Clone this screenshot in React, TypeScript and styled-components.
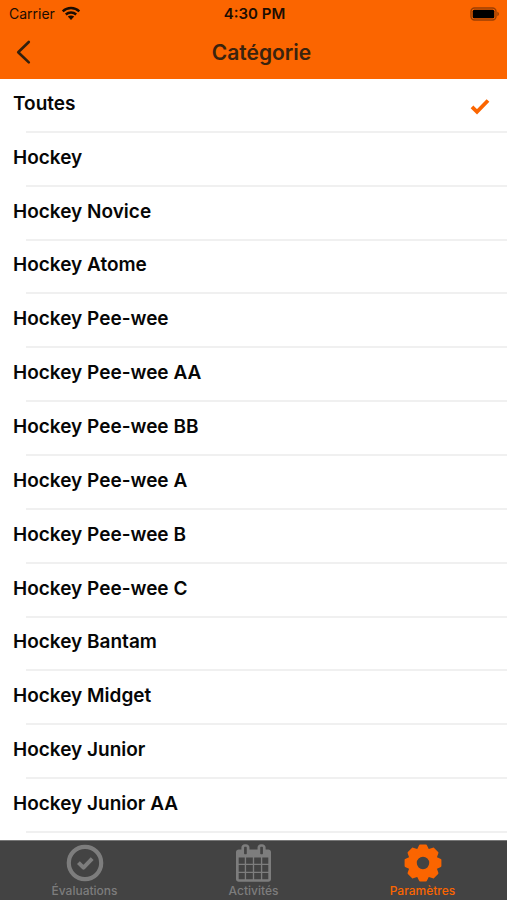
import React, { useState } from "react";
import styled, { createGlobalStyle } from "styled-components";

const orange = "#fb6500";

const GlobalStyle = createGlobalStyle`
  * { box-sizing: border-box; }
  body {
    margin: 0;
    background: #fff;
    color: #060606;
    font-family: Inter, "Liberation Sans", sans-serif;
  }
  button { font: inherit; border: 0; padding: 0; background: none; cursor: pointer; }
`;

const Screen = styled.div`
  display: flex;
  flex-direction: column;
  min-height: 100vh;
`;

const Header = styled.header`
  background: ${orange};
`;

const StatusBar = styled.div`
  display: grid;
  grid-template-columns: 1fr auto 1fr;
  align-items: center;
  height: 27px;
  padding: 0 7px 0 9px;
  font-size: 14px;
  color: #1c0d02;
`;

const Carrier = styled.div`
  display: flex;
  align-items: center;
  gap: 6px;
`;

const Clock = styled.time`
  font-size: 15px;
  line-height: 20px;
  font-weight: 600;
`;

const BatteryIcon = styled.svg`
  justify-self: end;
`;

const NavBar = styled.div`
  display: grid;
  grid-template-columns: 48px 1fr 32px;
  align-items: center;
  height: 52px;
`;

const BackButton = styled.button`
  display: grid;
  place-items: center;
  height: 52px;
  color: #33200e;
`;

const Title = styled.h1`
  margin: 0;
  font-size: 21px;
  line-height: 48px;
  font-weight: 600;
  text-align: center;
  color: #3a230e;
`;

const List = styled.ul`
  flex: 1;
  display: grid;
  grid-auto-rows: minmax(52px, 1fr);
  margin: 0;
  padding: 0 0 7px;
  list-style: none;
`;

const Row = styled.li`
  display: flex;
  flex-direction: column;
  &::after {
    content: "";
    height: 2px;
    margin-left: 26px;
    background: #f0f0f0;
  }
`;

const RowButton = styled.button`
  flex: 1;
  display: flex;
  align-items: center;
  justify-content: space-between;
  padding: 0 17px 2px 13px;
  font-size: 19px;
  line-height: 24px;
  font-weight: 600;
  text-align: left;
  color: #060606;
`;

const TickIcon = styled.svg`
  margin-top: 6px;
`;

const TabBar = styled.nav`
  display: grid;
  grid-template-columns: repeat(3, 1fr);
  height: 60px;
  background: #434343;
  border-top: 1px solid #777;
`;

const Tab = styled.button<{ $active: boolean }>`
  display: flex;
  flex-direction: column;
  align-items: center;
  gap: 1px;
  padding-top: 3px;
  font-size: 12px;
  line-height: 16px;
  font-weight: 500;
  color: ${(p) => (p.$active ? orange : "#7d7d7d")};
`;

const categories = [
  "Toutes",
  "Hockey",
  "Hockey Novice",
  "Hockey Atome",
  "Hockey Pee-wee",
  "Hockey Pee-wee AA",
  "Hockey Pee-wee BB",
  "Hockey Pee-wee A",
  "Hockey Pee-wee B",
  "Hockey Pee-wee C",
  "Hockey Bantam",
  "Hockey Midget",
  "Hockey Junior",
  "Hockey Junior AA",
];

const Wifi = () => (
  <svg width="20" height="15" viewBox="0 0 20 15" aria-hidden="true">
    <g fill="none" stroke="currentColor" strokeWidth="2.4">
      <path d="M1.7 5.3C6.4 .9 13.6 .9 18.3 5.3" />
      <path d="M4.8 8.5C7.8 5.8 12.2 5.8 15.2 8.5" />
    </g>
    <path d="M6.8 10.6C8.6 9 11.4 9 13.2 10.6L10 14Z" fill="currentColor" />
  </svg>
);

const Battery = () => (
  <BatteryIcon width="30" height="14" viewBox="0 0 30 14" aria-hidden="true">
    <rect x="1" y="1" width="25" height="12" rx="3.5" fill="none" stroke="#9a3f04" strokeWidth="1.4" />
    <rect x="2.7" y="2.7" width="21.6" height="8.6" rx="1.5" fill="#000" />
    <path d="M27.3 4.8C29.5 5.5 29.5 8.5 27.3 9.2Z" fill="#9a3f04" />
  </BatteryIcon>
);

const Back = () => (
  <svg width="16" height="26" viewBox="0 0 16 26" aria-hidden="true">
    <path d="M12.8 2L2.2 12.2L12.8 22.4" fill="none" stroke="currentColor" strokeWidth="2.6" strokeLinecap="round" strokeLinejoin="round" />
  </svg>
);

const Tick = () => (
  <TickIcon width="20" height="17" viewBox="0 0 20 17" aria-hidden="true">
    <path d="M2 8.8L7 13.8L18 2.5" fill="none" stroke={orange} strokeWidth="3.8" />
  </TickIcon>
);

const CheckCircle = () => (
  <svg width="38" height="38" viewBox="0 0 38 38" aria-hidden="true">
    <g fill="none" stroke="currentColor">
      <circle cx="19" cy="19" r="16.2" strokeWidth="4.2" />
      <path d="M12.4 18.6L17.5 23.7L26.2 14.6" strokeWidth="4" strokeLinejoin="round" />
    </g>
  </svg>
);

const Calendar = () => (
  <svg width="35" height="38" viewBox="0 0 1664 1792" aria-hidden="true">
    <path
      fill="currentColor"
      fillRule="evenodd"
      d="M128 1664h288v-288H128zM480 1664h320v-288H480zM128 1312h288V992H128zM480 1312h320V992H480zM128 928h288V640H128zM864 1664h320v-288H864zM480 928h320V640H480zM1248 1664h288v-288h-288zM864 1312h320V992H864zM512 448V160q0-32-32-32h-64q-32 0-32 32v288q0 32 32 32h64q32 0 32-32zM1248 1312h288V992h-288zM864 928h320V640H864zM1248 928h288V640h-288zM1280 448V160q0-32-32-32h-64q-32 0-32 32v288q0 32 32 32h64q32 0 32-32zM1664 384v1280q0 52-38 90t-90 38H128q-52 0-90-38t-38-90V384q0-52 38-90t90-38h128v-96q0-66 47-113T416 0h64q66 0 113 47t47 113v96h384v-96q0-66 47-113t113-47h64q66 0 113 47t47 113v96h128q52 0 90 38t38 90z"
    />
  </svg>
);

const toothAngles = [0, 45, 90, 135, 180, 225, 270, 315];

const Gear = () => (
  <svg width="38" height="38" viewBox="-19 -19 38 38" aria-hidden="true">
    <circle r="10.4" fill="none" stroke="currentColor" strokeWidth="8.4" />
    {toothAngles.map((angle) => (
      <path
        key={angle}
        d="M-5.6 -12L-3 -17.4H3L5.6 -12Z"
        fill="currentColor"
        stroke="currentColor"
        strokeWidth="2"
        strokeLinejoin="round"
        transform={`rotate(${angle})`}
      />
    ))}
  </svg>
);

const tabs = [
  { label: "Évaluations", Icon: CheckCircle },
  { label: "Activités", Icon: Calendar },
  { label: "Paramètres", Icon: Gear },
];

export default function App() {
  const [selected, setSelected] = useState("Toutes");
  const [activeTab, setActiveTab] = useState("Paramètres");

  return (
    <Screen>
      <GlobalStyle />
      <Header>
        <StatusBar>
          <Carrier>
            Carrier
            <Wifi />
          </Carrier>
          <Clock>4:30 PM</Clock>
          <Battery />
        </StatusBar>
        <NavBar>
          <BackButton aria-label="Retour">
            <Back />
          </BackButton>
          <Title>Catégorie</Title>
        </NavBar>
      </Header>
      <List>
        {categories.map((name) => (
          <Row key={name}>
            <RowButton aria-pressed={name === selected} onClick={() => setSelected(name)}>
              {name}
              {name === selected && <Tick />}
            </RowButton>
          </Row>
        ))}
      </List>
      <TabBar>
        {tabs.map(({ label, Icon }) => (
          <Tab key={label} $active={label === activeTab} onClick={() => setActiveTab(label)}>
            <Icon />
            {label}
          </Tab>
        ))}
      </TabBar>
    </Screen>
  );
}
